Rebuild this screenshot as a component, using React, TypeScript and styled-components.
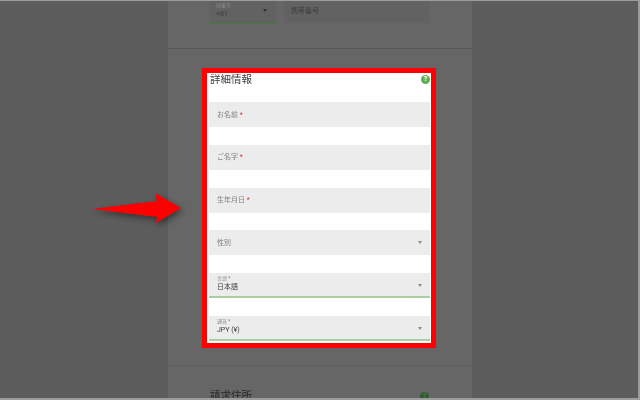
import React from 'react';
import styled, { createGlobalStyle, css } from 'styled-components';

const GlobalStyle = createGlobalStyle`
  html, body {
    margin: 0;
    padding: 0;
    background: #9c9c9c;
  }
  * {
    box-sizing: border-box;
  }
`;

const green = '#a9cf9f';

// the reference is a scaled down capture, its text is a little soft
const softText = css`
  filter: blur(0.35px);
`;

export default function App() {
  return (
    <>
      <GlobalStyle />
      <Screen>
        <Panel>
          <PhoneRow>
            <CountryCode>
              <SmallLabel>国番号</SmallLabel>
              <Value>+81</Value>
              <DarkCaret />
            </CountryCode>
            <MobileField>携帯番号</MobileField>
          </PhoneRow>
          <Divider />
          <RedFrame>
            <TitleRow>
              <Title>詳細情報</Title>
              <HelpIcon>?</HelpIcon>
            </TitleRow>
            <Fields>
              <Field>
                <Placeholder>
                  お名前 <Required>*</Required>
                </Placeholder>
              </Field>
              <Field>
                <Placeholder>
                  ご名字 <Required>*</Required>
                </Placeholder>
              </Field>
              <Field>
                <Placeholder>
                  生年月日 <Required>*</Required>
                </Placeholder>
              </Field>
              <Field>
                <Placeholder>性別</Placeholder>
                <Caret />
              </Field>
              <Field $filled>
                <SmallLabel>
                  言語 <Required>*</Required>
                </SmallLabel>
                <Value>日本語</Value>
                <Caret />
              </Field>
              <Field $filled>
                <SmallLabel>
                  通貨 <Required>*</Required>
                </SmallLabel>
                <Value>JPY (¥)</Value>
                <Caret />
              </Field>
            </Fields>
          </RedFrame>
          <BottomDivider />
          <NextTitleRow>
            <NextTitle>請求住所</NextTitle>
            <DimHelpIcon>?</DimHelpIcon>
          </NextTitleRow>
        </Panel>
        <Arrow viewBox="0 0 100 40" width="100" height="40">
          <polygon points="2,18 67,10 65,2 91,17 66,32 67,26" fill="#ff0000" />
        </Arrow>
      </Screen>
    </>
  );
}

const Screen = styled.div`
  position: relative;
  width: 640px;
  height: 400px;
  overflow: hidden;
  display: flex;
  justify-content: center;
  padding-left: 2px;
  background-color: #5c5c5c;
  background-image: conic-gradient(#5a5a5a 25%, #5f5f5f 0 50%, #5a5a5a 0 75%, #5f5f5f 0);
  background-size: 2px 2px;
  border: solid #9c9c9c;
  border-width: 1px 2px 2px 0;
  font-family: 'Roboto', 'Noto Sans CJK JP', sans-serif;
`;

const Panel = styled.div`
  width: 304px;
  margin-top: -1px;
  flex: none;
  background: #666666;
  display: flex;
  flex-direction: column;
  align-items: center;
`;

const PhoneRow = styled.div`
  width: 220px;
  height: 24px;
  flex: none;
  display: flex;
  gap: 8px;
  margin-right: 2px;
`;

const CountryCode = styled.div`
  position: relative;
  width: 67px;
  height: 23px;
  padding: 2px 7px 0;
  display: flex;
  flex-direction: column;
  background: #626262;
  border-bottom: 1px solid #3f7a38;
`;

const MobileField = styled.div`
  flex: 1;
  height: 23px;
  padding: 6px 7px;
  background: #626262;
  color: #3d3d3d;
  font-size: 7px;
  line-height: 10px;
  ${softText}
`;

const Divider = styled.div`
  width: 100%;
  height: 1px;
  flex: none;
  margin-top: 24px;
  background: #575757;
`;

const RedFrame = styled.section`
  width: 234px;
  height: 280px;
  flex: none;
  margin: 19px 2px 0 0;
  border: 5px solid #ff0000;
  background: #ffffff;
  overflow: hidden;
  padding: 0 1px 0 2px;
`;

const TitleRow = styled.div`
  height: 29px;
  display: flex;
  align-items: flex-start;
  justify-content: space-between;
`;

const Title = styled.h2`
  margin: 1px 0 0 1px;
  color: #3e3e3e;
  font-size: 10.5px;
  font-weight: 400;
  line-height: 12px;
  ${softText}
`;

const HelpIcon = styled.span`
  width: 9px;
  height: 9px;
  margin-top: 2px;
  border-radius: 50%;
  background: #5fae52;
  color: #ffffff;
  font-size: 7px;
  font-weight: 700;
  line-height: 9px;
  text-align: center;
`;

const Fields = styled.div`
  display: flex;
  flex-direction: column;
  gap: 17.75px;
`;

const Field = styled.div<{ $filled?: boolean }>`
  position: relative;
  height: 25px;
  flex: none;
  padding: ${(p) => (p.$filled ? '2px 8px 0' : '0 8px')};
  display: flex;
  flex-direction: column;
  justify-content: ${(p) => (p.$filled ? 'flex-start' : 'center')};
  background: #ececec;
  border-bottom: ${(p) => (p.$filled ? `2px solid ${green}` : 'none')};
`;

const Placeholder = styled.span`
  color: #808080;
  font-size: 7px;
  line-height: 10px;
  ${softText}
`;

const SmallLabel = styled.span`
  color: #8a8a8a;
  font-size: 5px;
  line-height: 7px;
  ${softText}
`;

const Value = styled.span`
  color: #3c3c3c;
  font-size: 7px;
  line-height: 10px;
  ${softText}
`;

const Required = styled.span`
  color: #d33a3a;
`;

const Caret = styled.span`
  position: absolute;
  top: 11px;
  right: 8px;
  border-style: solid;
  border-width: 3px 2.5px 0;
  border-color: #8c8c8c transparent transparent;
`;

const DarkCaret = styled(Caret)`
  top: 9px;
  right: 9px;
  border-color: #2f2f2f transparent transparent;
`;

const BottomDivider = styled(Divider)`
  margin-top: 17px;
  background: #5e5e5e;
`;

const NextTitleRow = styled.div`
  width: 220px;
  flex: none;
  margin: 23px 2px 0 0;
  display: flex;
  justify-content: space-between;
  align-items: center;
`;

const NextTitle = styled.h2`
  margin: 0 0 0 1px;
  color: #262626;
  font-size: 10.5px;
  font-weight: 400;
  line-height: 14px;
  ${softText}
`;

const DimHelpIcon = styled(HelpIcon)`
  margin: 0;
  background: #2f5e2b;
  color: #666666;
`;

const Arrow = styled.svg`
  position: absolute;
  left: 90px;
  top: 190px;
  filter: drop-shadow(2px 3px 3px rgba(0, 0, 0, 0.45));
`;
